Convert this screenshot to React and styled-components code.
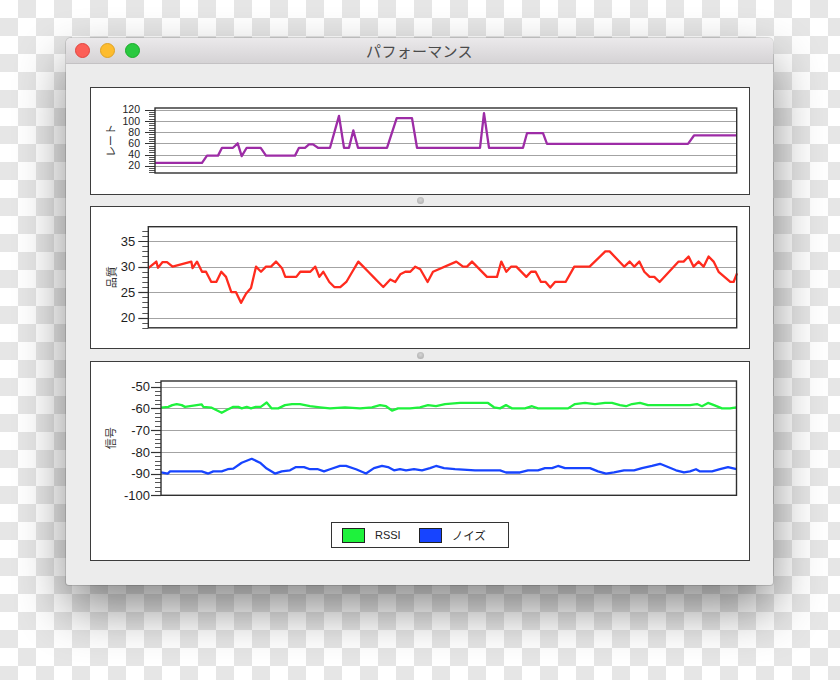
import React from "react";
import styled, { createGlobalStyle } from "styled-components";

const GlobalStyle = createGlobalStyle`
  html, body {
    margin: 0;
    padding: 0;
  }
  body {
    font-family: "Liberation Sans", "Noto Sans CJK JP", sans-serif;
  }
`;

// x = px from the plot's left edge, v = value
const rateData = [
  [0, 25], [47, 25], [52, 38], [63, 38], [67, 52], [78, 52], [82.7, 60], [86.7, 37],
  [91.7, 52], [105.7, 52], [111, 38], [140, 38], [144, 52], [150, 52], [154, 58],
  [158, 58], [163, 52], [175, 52], [184, 109], [189, 52], [194, 52], [198.3, 83],
  [203, 52], [232, 52], [241.7, 105], [257, 105], [262, 52], [325, 52], [329, 114],
  [334, 52], [368, 52], [372, 78], [388, 78], [392, 59], [533, 59], [539, 74], [582, 74],
];

const qualityData = [
  [0, 29.7], [8, 31], [9.7, 29.8], [14.3, 30.9], [18.7, 30.9], [24.3, 30], [43, 31],
  [44.3, 29.7], [48.7, 31], [53.7, 29], [57.7, 29], [63, 27], [68, 27], [73, 29],
  [77.7, 28], [83, 25], [87.7, 25], [92.7, 22.9], [97.7, 24.7], [102.7, 25.8],
  [107.7, 30], [112.7, 29], [117.7, 30], [122.7, 30], [127.7, 31], [133.7, 29.7],
  [137, 28], [142, 28], [148, 28], [152, 29], [162, 29], [167, 30], [171, 28],
  [175, 29], [181, 27], [186, 26], [192, 26], [198, 27], [204, 29], [210, 31],
  [215, 30], [220, 29], [225, 28], [230, 27], [235, 26], [242, 27.5], [247, 27],
  [252, 28.5], [257, 29], [262, 29], [267, 30], [272, 29.5], [279.3, 27], [284.7, 29],
  [308, 31], [314.7, 30], [318.7, 30], [323.7, 31], [338.7, 28], [348.7, 28], [353, 31],
  [358, 29], [362.7, 30], [368, 30], [378, 28], [382.7, 29], [387.3, 29], [392.7, 27],
  [397.3, 27], [402, 25.9], [406.7, 27], [417.3, 27], [426, 30], [441.3, 30], [457, 33],
  [461.3, 33], [476, 30], [481.3, 31], [486, 30], [491, 31], [496, 29], [501.3, 28],
  [506, 28], [511.3, 27], [530.3, 31], [535.3, 31], [540.3, 32], [545.3, 30],
  [550.3, 31], [555.3, 30], [560.3, 32], [565.3, 31], [570.3, 29], [582, 27],
  [585.3, 27], [588.7, 28.7],
];

const rssiData = [
  [0, -59.7], [7.3, -59.3], [11.3, -58.5], [15.7, -58], [20.7, -58.5], [24, -59.3],
  [40.7, -58.2], [42.3, -59.3], [50.7, -59.7], [60.7, -62], [66.7, -60.5], [72.3, -59.3],
  [77.3, -59.3], [80.7, -60], [85.7, -59.3], [90, -60], [94.7, -59.3], [99.7, -59.3],
  [105.7, -57.3], [110.7, -60], [117.3, -60], [124, -58.5], [131, -58], [139, -58],
  [149, -59], [159, -59.5], [169, -60], [184, -59.5], [199, -60], [211, -59.5],
  [219, -58.5], [225, -59], [231, -61], [237, -60], [249, -60], [259, -59.5],
  [267, -58.5], [275, -59], [284, -58], [299, -57.5], [327, -57.5], [333, -59.5],
  [339, -60], [345, -58.5], [351, -60], [364, -60], [371, -59], [377, -60], [407, -60],
  [414, -58], [424, -57.5], [434, -58], [444, -57.5], [451, -57.5], [459, -58.5],
  [465, -59], [471, -58], [479, -57.5], [487, -58.5], [499, -58.5], [529, -58.5],
  [536, -58], [541, -59], [547, -57.5], [553, -58.5], [561, -60], [569, -60],
  [575.5, -59.5],
];

const noiseData = [
  [0, -89.4], [6.7, -90], [9, -89], [40.7, -89], [47.3, -90], [52.3, -89], [60.7, -89],
  [66.7, -88], [72.3, -87.7], [80.7, -85], [90.7, -83.2], [99, -85], [105.7, -87.7],
  [114, -90], [120.7, -89], [129, -88.5], [135, -87], [143, -87], [149, -88], [157, -88],
  [163, -89], [169, -88], [179, -86.5], [185, -86.5], [195, -88], [205, -90],
  [213, -87.5], [221, -86.5], [227, -87], [233, -88.5], [239, -88], [245, -88.5],
  [253, -88], [261, -88.5], [269, -87.5], [275, -86.5], [283, -87.5], [294, -88],
  [314, -88.5], [339, -88.5], [345, -89.5], [359, -89.5], [367, -88.5], [377, -88.5],
  [384, -87.5], [391, -87.5], [397, -86.5], [404, -87.5], [429, -87.5], [437, -89],
  [445, -90], [453, -89.5], [463, -88.5], [473, -88.5], [481, -87.5], [491, -86.5],
  [499, -85.5], [507, -87], [515, -88.5], [523, -89.5], [529, -89], [535, -88],
  [539, -89], [551, -89], [559, -88], [567, -87], [575.5, -88],
];

const COLORS = {
  rate: "#9d2ca6",
  quality: "#ff2b1e",
  rssi: "#1ef23c",
  noise: "#1744ff",
};

const Chart = ({
  width,
  height,
  plot,
  domain,
  major,
  minorStep,
  labelSize,
  labelGap,
  title,
  titleX,
  series,
}) => {
  const { left, top, right, bottom } = plot;
  const [min, max] = domain;
  const sy = (v) => bottom - ((v - min) / (max - min)) * (bottom - top);
  const crisp = (y) => Math.round(y) + 0.5;

  const minors = [];
  const first = Math.ceil(min / minorStep);
  const last = Math.floor(max / minorStep);
  for (let i = first; i <= last; i++) {
    const v = +(i * minorStep).toFixed(4);
    if (!major.includes(v)) minors.push(v);
  }

  return (
    <ChartSvg width={width} height={height}>
      <text
        transform={`translate(${titleX} ${(top + bottom) / 2}) rotate(-90)`}
        textAnchor="middle"
        dominantBaseline="central"
        fontFamily='"Noto Sans CJK JP", sans-serif'
        fontSize="11"
        fill="#333"
      >
        {title}
      </text>

      {major.map((v) => (
        <line
          key={`g${v}`}
          x1={left}
          x2={right}
          y1={crisp(sy(v))}
          y2={crisp(sy(v))}
          stroke="#a3a3a3"
          strokeWidth="1"
        />
      ))}

      {minors.map((v) => (
        <line
          key={`m${v}`}
          x1={left - 6}
          x2={left}
          y1={crisp(sy(v))}
          y2={crisp(sy(v))}
          stroke="#555"
          strokeWidth="1"
        />
      ))}

      {major.map((v) => (
        <g key={`t${v}`}>
          <line
            x1={left - 10}
            x2={left}
            y1={crisp(sy(v))}
            y2={crisp(sy(v))}
            stroke="#333"
            strokeWidth="1.2"
          />
          <text
            x={left - labelGap}
            y={sy(v) + labelSize * 0.36}
            textAnchor="end"
            fontFamily='"Liberation Sans", sans-serif'
            fontSize={labelSize}
            fill="#1e1e1e"
          >
            {v}
          </text>
        </g>
      ))}

      {series.map((s) => (
        <polyline
          key={s.name}
          points={s.data.map(([x, v]) => `${left + x},${sy(v).toFixed(2)}`).join(" ")}
          fill="none"
          stroke={s.color}
          strokeWidth="2.3"
          strokeLinejoin="round"
        />
      ))}

      <rect
        x={left}
        y={top}
        width={right - left}
        height={bottom - top}
        fill="none"
        stroke="#2f2f2f"
        strokeWidth="1.4"
      />
    </ChartSvg>
  );
};

const App = () => {
  return (
    <>
      <GlobalStyle />
      <Page>
        <Window>
          <TitleBar>
            <Lights>
              <Light $color="#fc5f57" $edge="#e0443e" />
              <Light $color="#fdbc2e" $edge="#dea123" />
              <Light $color="#2ac940" $edge="#1aab29" />
            </Lights>
            <Title>パフォーマンス</Title>
            <span />
          </TitleBar>

          <Content>
            <Panel $h={108}>
              <Chart
                width={658}
                height={106}
                plot={{ left: 64, top: 20, right: 645.7, bottom: 85 }}
                domain={[7, 123]}
                major={[20, 40, 60, 80, 100, 120]}
                minorStep={4}
                labelSize={10.5}
                labelGap={15}
                title="レート"
                titleX={19}
                series={[{ name: "rate", color: COLORS.rate, data: rateData }]}
              />
            </Panel>

            <Splitter $h={11}>
              <Knob />
            </Splitter>

            <Panel $h={143}>
              <Chart
                width={658}
                height={141}
                plot={{ left: 57.3, top: 19.7, right: 645.7, bottom: 120.8 }}
                domain={[18, 37.85]}
                major={[20, 25, 30, 35]}
                minorStep={1}
                labelSize={13}
                labelGap={13}
                title="品質"
                titleX={20}
                series={[{ name: "quality", color: COLORS.quality, data: qualityData }]}
              />
            </Panel>

            <Splitter $h={12}>
              <Knob />
            </Splitter>

            <Panel $h={200}>
              <Chart
                width={658}
                height={150}
                plot={{ left: 70, top: 19, right: 645.5, bottom: 133.3 }}
                domain={[-100, -47.4]}
                major={[-100, -90, -80, -70, -60, -50]}
                minorStep={2}
                labelSize={13}
                labelGap={11}
                title="信号"
                titleX={19}
                series={[
                  { name: "rssi", color: COLORS.rssi, data: rssiData },
                  { name: "noise", color: COLORS.noise, data: noiseData },
                ]}
              />
              <LegendRow>
                <Legend>
                  <LegendItem>
                    <Swatch $color={COLORS.rssi} />
                    <LegendLabel>RSSI</LegendLabel>
                  </LegendItem>
                  <LegendItem>
                    <Swatch $color={COLORS.noise} />
                    <LegendLabel $jp>ノイズ</LegendLabel>
                  </LegendItem>
                </Legend>
              </LegendRow>
            </Panel>
          </Content>
        </Window>
      </Page>
    </>
  );
};

export default App;

const Page = styled.div`
  width: 840px;
  height: 680px;
  box-sizing: border-box;
  padding: 38px 0 0 66px;
  overflow: hidden;
  background-color: #fff;
  background-image: conic-gradient(
    #e6e6e6 25%,
    transparent 0 50%,
    #e6e6e6 0 75%,
    transparent 0
  );
  background-size: 36px 36px;
`;

const Window = styled.div`
  width: 707px;
  height: 547px;
  display: flex;
  flex-direction: column;
  background: #ececec;
  border-radius: 5px 5px 3px 3px;
  overflow: hidden;
  box-shadow: 0 0 0 1px rgba(0, 0, 0, 0.12), 0 24px 50px rgba(0, 0, 0, 0.45);
`;

const TitleBar = styled.div`
  height: 26px;
  box-sizing: border-box;
  display: grid;
  grid-template-columns: 1fr auto 1fr;
  align-items: center;
  background: linear-gradient(#ebe9eb, #d5d3d5);
  border-bottom: 1px solid #c4c2c4;
`;

const Lights = styled.div`
  display: flex;
  align-items: center;
  gap: 10px;
  padding-left: 9px;
`;

const Light = styled.span`
  width: 13px;
  height: 13px;
  border-radius: 50%;
  background: ${(p) => p.$color};
  border: 0.5px solid ${(p) => p.$edge};
`;

const Title = styled.div`
  font-family: "Noto Sans CJK JP", sans-serif;
  font-size: 15px;
  color: #4b4b4b;
  line-height: 1;
  letter-spacing: 0.3px;
`;

const Content = styled.div`
  display: flex;
  flex-direction: column;
  padding: 23px 23px 24px 24px;
`;

const Panel = styled.div`
  height: ${(p) => p.$h}px;
  box-sizing: border-box;
  display: flex;
  flex-direction: column;
  background: #fff;
  border: 1px solid #3d3d3d;
`;

const ChartSvg = styled.svg`
  display: block;
  flex: none;
`;

const Splitter = styled.div`
  height: ${(p) => p.$h}px;
  display: flex;
  align-items: center;
  justify-content: center;
`;

const Knob = styled.span`
  width: 7px;
  height: 7px;
  border-radius: 50%;
  background: radial-gradient(circle at 50% 40%, #d4d4d4, #a8a8a8);
`;

const LegendRow = styled.div`
  display: flex;
  justify-content: center;
  padding-top: 10px;
`;

const Legend = styled.div`
  width: 178px;
  height: 26px;
  box-sizing: border-box;
  display: flex;
  align-items: center;
  gap: 18px;
  padding-left: 10px;
  border: 1px solid #333;
`;

const LegendItem = styled.div`
  display: flex;
  align-items: center;
  gap: 10px;
`;

const Swatch = styled.span`
  width: 23px;
  height: 15px;
  box-sizing: border-box;
  background: ${(p) => p.$color};
  border: 1px solid #222;
`;

const LegendLabel = styled.span`
  font-family: ${(p) =>
    p.$jp ? '"Noto Sans CJK JP", sans-serif' : '"Liberation Sans", sans-serif'};
  font-size: ${(p) => (p.$jp ? "11.5px" : "11px")};
  color: #222;
`;
